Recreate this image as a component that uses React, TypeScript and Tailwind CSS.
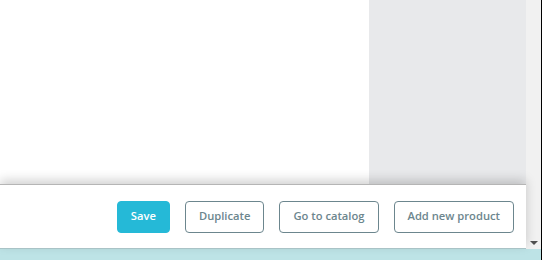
import React from 'react'

// ── 하단 액션 버튼 ────────────────────────────────────────────────────────────

function ActionButton({ label, primary }: { label: string; primary?: boolean }) {
  return (
    <button
      className={
        primary
          ? 'h-[32px] px-[13px] rounded-[4px] bg-[#25b9d7] border border-[#25b9d7] text-white text-[11.2px] font-semibold'
          : 'h-[32px] px-[13px] rounded-[4px] bg-white border border-[#6c868e] text-[#6c868e] text-[11.2px] font-semibold'
      }
    >
      {label}
    </button>
  )
}

export default function App() {
  return (
    <div
      className="flex w-[550px] h-[260px] bg-white overflow-hidden"
      style={{ fontFamily: '"Open Sans", "Noto Sans", sans-serif' }}
    >
      <div className="flex flex-col w-[541px]">
        <div className="flex h-[249px]">
          {/* 본문 영역 */}
          <div className="flex flex-col flex-1">
            <div className="flex h-[184px]">
              <div className="flex-1 bg-white" />
              <div className="w-[157px] bg-[#e8e9eb]" />
            </div>

            {/* 하단 고정 툴바 */}
            <div className="relative z-10 flex flex-1 items-center justify-end gap-[15px] pr-[12px] bg-white border-t border-[#b5b5b5] border-b border-b-[#a9c3c6] shadow-[0_-4px_10px_rgba(0,0,0,0.18)]">
              <ActionButton label="Save" primary />
              <ActionButton label="Duplicate" />
              <ActionButton label="Go to catalog" />
              <ActionButton label="Add new product" />
            </div>
          </div>

          {/* 스크롤바 */}
          <div className="relative w-[15px] bg-[#f1f1f1]">
            <div className="absolute bottom-[4px] left-[4px] w-0 h-0 border-l-[4px] border-r-[4px] border-t-[4px] border-l-transparent border-r-transparent border-t-[#505050]" />
          </div>
        </div>
        <div className="flex-1 bg-[#bde3e6]" />
      </div>
      <div className="w-[1px] bg-black" />
      <div className="flex-1 bg-white" />
    </div>
  )
}
